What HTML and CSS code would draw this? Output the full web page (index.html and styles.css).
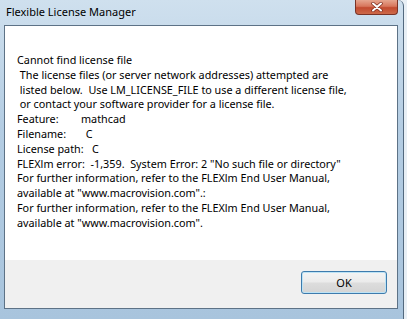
FILE: index.html
```html
<!DOCTYPE html>
<html lang="en">
<head>
    <meta charset="UTF-8">
    <meta name="viewport" content="width=device-width, initial-scale=1.0">
    <title>Flexible License Manager</title>
    <link rel="stylesheet" href="styles.css">
</head>
<body>
    <div class="window">
        <div class="titlebar">
            <span class="title">Flexible License Manager</span>
            <div class="close-btn">
                <svg width="14" height="10" viewBox="0 0 14 10">
                    <path d="M3 1.5 L11 8.5 M11 1.5 L3 8.5" stroke="#7a2a1c" stroke-width="3.4" stroke-linecap="round"/>
                    <path d="M3 1.5 L11 8.5 M11 1.5 L3 8.5" stroke="#ffffff" stroke-width="2" stroke-linecap="round"/>
                </svg>
            </div>
        </div>
        <div class="client">
            <div class="message">
<p class="line">Cannot find license file</p>
<p class="line"> The license files (or server network addresses) attempted are</p>
<p class="line"> listed below.  Use LM_LICENSE_FILE to use a different license file,</p>
<p class="line"> or contact your software provider for a license file.</p>
<p class="line">Feature:        mathcad</p>
<p class="line">Filename:       C</p>
<p class="line">License path:   C</p>
<p class="line">FLEXlm error:  -1,359.  System Error: 2 "No such file or directory"</p>
<p class="line">For further information, refer to the FLEXlm End User Manual,</p>
<p class="line">available at "www.macrovision.com".:</p>
<p class="line">For further information, refer to the FLEXlm End User Manual,</p>
<p class="line">available at "www.macrovision.com".</p>
            </div>
            <div class="button-bar">
                <button class="ok-btn">OK</button>
            </div>
        </div>
    </div>
</body>
</html>
```

FILE: styles.css
```css
body {
    margin: 0;
    background-color: #e8eff5;
    font-family: "Noto Sans", "Open Sans", sans-serif;
    color: #000;
}
.window {
    width: 404px;
    height: 319px;
    box-sizing: border-box;
    padding: 0 5px 10px 4px;
    display: flex;
    flex-direction: column;
    background: linear-gradient(180deg, #cfe0ee 0%, #b4cde3 40%, #a8c4dd 100%);
    border-right: 1px solid #53697e;
    border-top-right-radius: 6px;
}
.titlebar {
    height: 25px;
    display: flex;
    justify-content: space-between;
    align-items: flex-start;
}
.title {
    font-size: 11px;
    line-height: 14px;
    padding: 5px 0 0 2px;
}
.close-btn {
    width: 43px;
    height: 15px;
    box-sizing: border-box;
    border: 1px solid #7a3326;
    border-top: none;
    border-radius: 0 0 4px 4px;
    background: linear-gradient(180deg, #e6a58f 0%, #d7765c 45%, #c24a2f 55%, #cd6a4a 100%);
    display: flex;
    justify-content: center;
    align-items: center;
}
.client {
    flex: 1;
    display: flex;
    flex-direction: column;
    border: 1px solid #5d7286;
}
.message {
    flex: 1;
    background-color: #fff;
    padding: 27px 12px 0 12px;
    font-size: 10.8px;
    line-height: 14.8px;
}
.line {
    margin: 0;
    white-space: pre;
}
.button-bar {
    height: 48px;
    background-color: #f0f0f0;
    display: flex;
    justify-content: flex-end;
    align-items: flex-start;
    padding: 11px 10px 0 0;
    box-sizing: border-box;
}
.ok-btn {
    width: 86px;
    height: 23px;
    border: 1px solid #3d7bad;
    border-radius: 3px;
    background: linear-gradient(180deg, #f4f4f4 0%, #ebebeb 48%, #dddddd 52%, #d4d4d4 100%);
    box-shadow: inset 0 0 0 1px #bde3f5;
    font-family: "Noto Sans", "Open Sans", sans-serif;
    font-size: 11px;
    color: #000;
    padding: 0;
}
```
